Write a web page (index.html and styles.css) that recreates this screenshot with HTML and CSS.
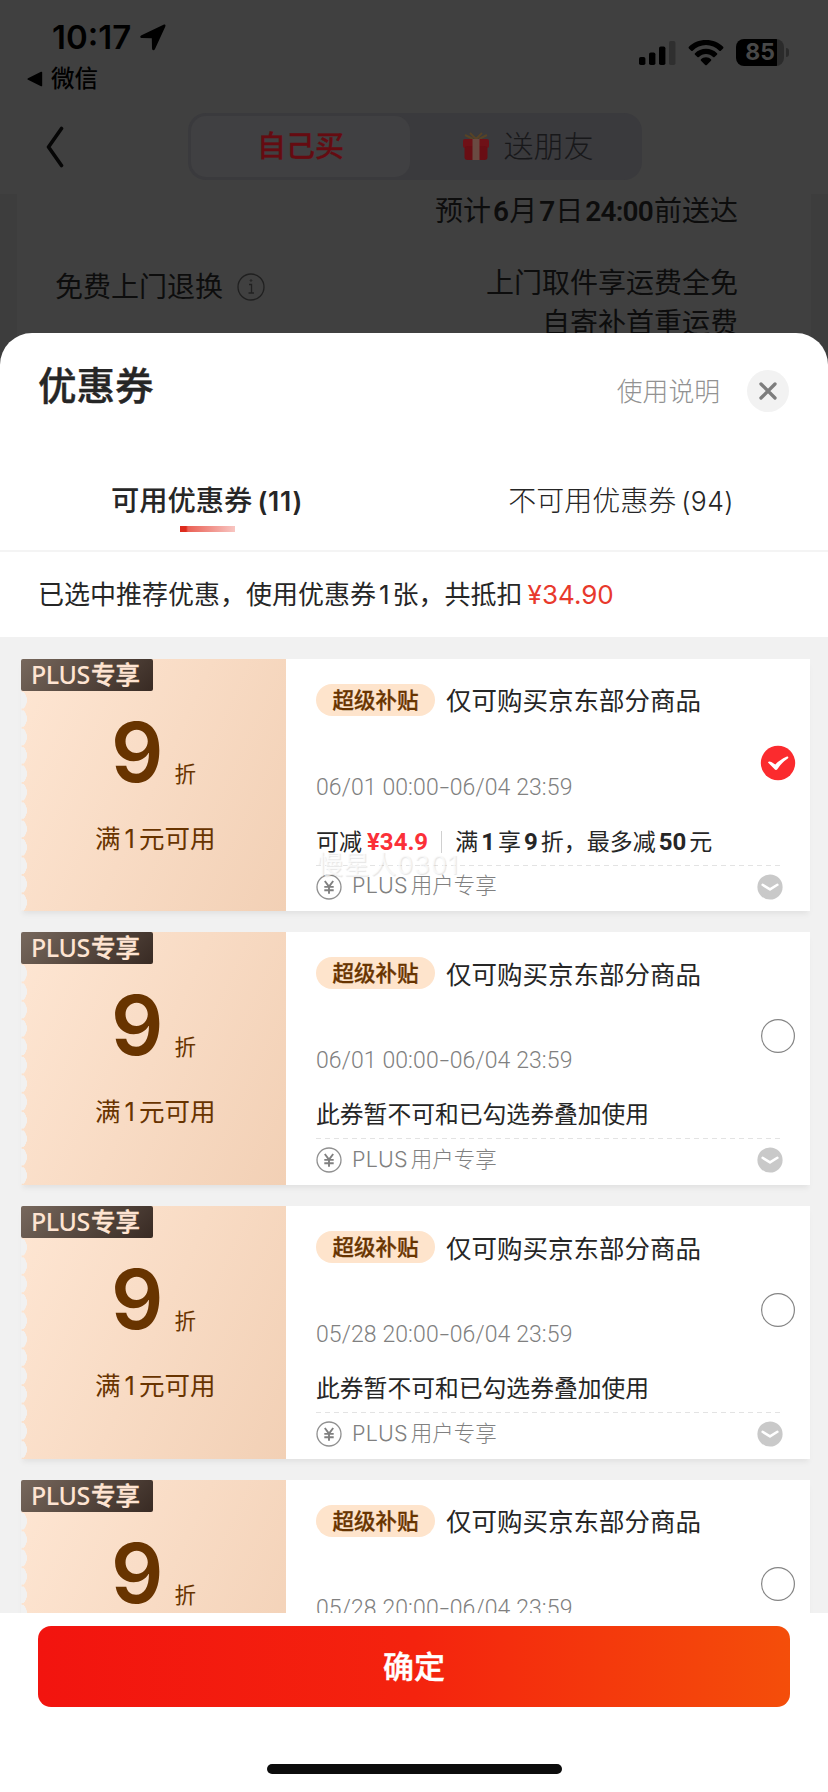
FILE: index.html
```html
<!DOCTYPE html>
<html lang="zh-CN">
<head>
<meta charset="utf-8">
<title>优惠券</title>
<link rel="stylesheet" href="styles.css">
</head>
<body>
<svg width="0" height="0" class="defs">
  <symbol id="yen" viewBox="0 0 26 26"><circle cx="13" cy="13" r="12" fill="none" stroke="#909090" stroke-width="1.3"/><path d="M8.8 7l4.2 5.6L17.2 7M13 12.6v7.2M8.3 12.9h9.4M8.3 16.2h9.4" fill="none" stroke="#808080" stroke-width="1.9"/></symbol>
  <symbol id="more" viewBox="0 0 26 26"><circle cx="13" cy="13" r="12.6" fill="#c9c9c9"/><path d="M5.6 10.8l7.4 4.6 7.4-4.6" fill="none" stroke="#fff" stroke-width="2.5" stroke-linecap="round" stroke-linejoin="round"/></symbol>
  <symbol id="radio" viewBox="0 0 36 36"><circle cx="18" cy="18" r="16.4" fill="#fff" stroke="#858585" stroke-width="1.2"/></symbol>
  <symbol id="checked" viewBox="0 0 36 36"><circle cx="18" cy="18" r="17.2" fill="#fb2b2e"/><path d="M8 17.6c.6-1.5 2-1.2 3.300-.5l4 2.300c2.500-2.700 6.500-5.600 11.200-7.700 1.500-.6 2.500.7 1.300 1.800-4 2.500-7.400 6-10.300 10.500-.9 1.300-2.100 1.300-3.100.1z" fill="#fff"/></symbol>
</svg>
<div class="screen">
  <div class="page">
    <div class="status">
      <div class="status-left">
        <div class="clock"><span>10:17</span><svg width="26" height="27" viewBox="0 0 26 27"><path d="M23.500.8L1.500 11.200c-2 1-1.500 2.800.6 2.800l9.700.2.200 10c0 2.200 2 2.700 3 .7L25.200 2.700C26 1 25 .1 23.500.8z"/></svg></div>
        <div class="return"><svg width="16" height="16" viewBox="0 0 16 16"><path d="M14 .8L1 7.200q-1.200.8 0 1.600l13 6.400q1.200.4 1.200-.8V1.600q0-1.200-1.200-.8z"/></svg><span>微信</span></div>
      </div>
      <div class="status-right">
        <svg width="37" height="26" viewBox="0 0 37 26"><rect x="0" y="17" width="6.400" height="8" rx="1.800"/><rect x="10" y="12.500" width="6.400" height="12.500" rx="1.800"/><rect x="20" y="6.500" width="6.400" height="18.500" rx="1.800"/><rect x="30" y="1" width="6.400" height="24" rx="1.800" fill="#2f2f2f"/></svg>
        <svg class="wifi" width="36" height="26" viewBox="0 0 36 26"><path d="M18 0C11 0 5 2.600.9 6.800q-.8.8 0 1.600l2.300 2.300q.7.700 1.500 0C8.300 7.200 12.900 5.100 18 5.100s9.700 2.100 13.300 5.600q.8.700 1.500 0l2.300-2.300q.8-.8 0-1.600C31 2.600 25 0 18 0z"/><path d="M18 8.700c-4.300 0-8.200 1.700-11 4.500q-.8.800 0 1.500l2.400 2.300q.7.700 1.500 0c1.900-1.900 4.400-3 7.100-3s5.200 1.100 7.100 3q.8.700 1.500 0l2.400-2.300q.8-.7 0-1.500c-2.800-2.800-6.700-4.500-11-4.500z"/><path d="M18 17.200c-2 0-3.800.8-5 2q-.7.800 0 1.600l4.200 4.200q.8.700 1.600 0l4.200-4.200q.7-.8 0-1.600c-1.200-1.200-3-2-5-2z"/></svg>
        <div class="battery"><span>85</span></div><i class="nub"></i>
      </div>
    </div>
    <div class="nav">
      <svg width="18" height="42" viewBox="0 0 18 42"><path d="M15.500 2.500L2.500 21l13 18.500" fill="none" stroke="#060606" stroke-width="3.600" stroke-linecap="round" stroke-linejoin="round"/></svg>
      <div class="segments">
        <div class="segment active">自己买</div>
        <div class="segment"><svg width="28" height="29" viewBox="0 0 28 29"><path d="M3 3l8 4M25 3l-8 4M14 7L8 1M14 7l6-6" stroke="#574326" stroke-width="2" fill="none"/><rect x="1" y="7" width="26" height="9" rx="2" fill="#6f1117"/><rect x="2.500" y="14" width="23" height="14" rx="3" fill="#690e14"/><rect x="10.500" y="7" width="7" height="21" fill="#6a4a42"/></svg><span>送朋友</span></div>
      </div>
    </div>
    <div class="order">
      <div class="arrive">预计<b>6</b>月<b>7</b>日<b>24:00</b>前送达</div>
      <div class="returns">
        <div class="returns-label"><span>免费上门退换</span><svg width="28" height="28" viewBox="0 0 28 28" fill="none" stroke="#202020"><circle cx="14" cy="14" r="13" stroke-width="1.300"/><path d="M12 11.500h2.500v8M11.500 20h5.500" stroke-width="1.300"/><circle cx="14" cy="7.500" r=".8"/></svg></div>
        <div class="returns-value">上门取件享运费全免<br>自寄补首重运费</div>
      </div>
    </div>
  </div>

  <div class="sheet">
    <div class="sheet-head">
      <h1>优惠券</h1>
      <span class="help">使用说明</span>
      <svg width="42" height="42" viewBox="0 0 42 42"><circle cx="21" cy="21" r="21" fill="#f2f2f2"/><path d="M14 14l14 14M28 14L14 28" stroke="#7d7d7d" stroke-width="3.300" stroke-linecap="round"/></svg>
    </div>
    <div class="tabs">
      <div class="tab current"><span>可用优惠券<em>(11)</em></span><i></i></div>
      <div class="tab"><span>不可用优惠券<em>(94)</em></span></div>
    </div>
    <div class="summary">已选中推荐优惠，使用优惠券<em>1</em>张，共抵扣<strong>¥34.90</strong></div>
    <div class="list">
      <div class="coupon">
        <div class="ticket"><div class="plus">PLUS<b>专享</b></div><div class="rate"><strong>9</strong><span>折</span></div><div class="limit">满<em>1</em>元可用</div></div>
        <div class="info">
          <div class="title"><span class="badge">超级补贴</span><span class="scope">仅可购买京东部分商品</span></div>
          <div class="date">06/01 00:00<span class="dash">-</span>06/04 23:59</div>
          <div class="detail offer"><span>可减</span><strong>¥34.9</strong><i></i><span>满<b>1</b>享<b>9</b>折，最多减<b>50</b>元</span></div>
          <div class="note"><svg width="26" height="26"><use href="#yen"/></svg><span><em>PLUS</em>用户专享</span><svg class="more" width="26" height="26"><use href="#more"/></svg></div>
          <svg class="choice" width="36" height="36"><use href="#checked"/></svg>
          <div class="watermark">慢星人0301</div>
        </div>
      </div>
      <div class="coupon">
        <div class="ticket"><div class="plus">PLUS<b>专享</b></div><div class="rate"><strong>9</strong><span>折</span></div><div class="limit">满<em>1</em>元可用</div></div>
        <div class="info">
          <div class="title"><span class="badge">超级补贴</span><span class="scope">仅可购买京东部分商品</span></div>
          <div class="date">06/01 00:00<span class="dash">-</span>06/04 23:59</div>
          <div class="detail">此券暂不可和已勾选券叠加使用</div>
          <div class="note"><svg width="26" height="26"><use href="#yen"/></svg><span><em>PLUS</em>用户专享</span><svg class="more" width="26" height="26"><use href="#more"/></svg></div>
          <svg class="choice" width="36" height="36"><use href="#radio"/></svg>
        </div>
      </div>
      <div class="coupon">
        <div class="ticket"><div class="plus">PLUS<b>专享</b></div><div class="rate"><strong>9</strong><span>折</span></div><div class="limit">满<em>1</em>元可用</div></div>
        <div class="info">
          <div class="title"><span class="badge">超级补贴</span><span class="scope">仅可购买京东部分商品</span></div>
          <div class="date">05/28 20:00<span class="dash">-</span>06/04 23:59</div>
          <div class="detail">此券暂不可和已勾选券叠加使用</div>
          <div class="note"><svg width="26" height="26"><use href="#yen"/></svg><span><em>PLUS</em>用户专享</span><svg class="more" width="26" height="26"><use href="#more"/></svg></div>
          <svg class="choice" width="36" height="36"><use href="#radio"/></svg>
        </div>
      </div>
      <div class="coupon">
        <div class="ticket"><div class="plus">PLUS<b>专享</b></div><div class="rate"><strong>9</strong><span>折</span></div></div>
        <div class="info">
          <div class="title"><span class="badge">超级补贴</span><span class="scope">仅可购买京东部分商品</span></div>
          <div class="date">05/28 20:00<span class="dash">-</span>06/04 23:59</div>
          <svg class="choice" width="36" height="36"><use href="#radio"/></svg>
        </div>
      </div>
    </div>
    <div class="footer">
      <div class="confirm">确定</div>
      <div class="home"></div>
    </div>
  </div>
</div>
</body>
</html>
```

FILE: styles.css
```css
* { box-sizing: border-box; }
body { margin: 0; font-family: Inter, "Noto Sans CJK SC", sans-serif; color: #262626; }
em { font-style: normal; }
svg { display: block; flex: none; }
.defs { position: absolute; }
.screen { width: 828px; height: 1792px; overflow: hidden; background: #404040; white-space: nowrap; }

/* Dimmed order page */
.page { height: 364px; color: #0d0d0d; }
.status { height: 98px; display: flex; justify-content: space-between; padding: 18px 39px 0 27px; color: #000; }
.clock { display: flex; align-items: center; gap: 9px; height: 38px; padding-left: 25px; }
.clock span { font-size: 33px; font-weight: 600; letter-spacing: 0; line-height: 38px; }
.return { display: flex; align-items: center; gap: 8px; height: 46px; }
.return span { font-size: 23.500px; font-weight: 500; line-height: 46px; }
.status-right { display: flex; align-items: center; height: 69px; }
.wifi { margin-left: 12px; }
.battery { margin-left: 12px; width: 48px; height: 27px; border-radius: 8px; background: linear-gradient(90deg, #000 41px, #2b2b2b 41px); display: flex; align-items: center; }
.battery span { width: 46px; padding-left: 2px; text-align: center; font-size: 23px; font-weight: 700; color: #484848; line-height: 27px; }
.nub { width: 3px; height: 9px; margin-left: 2px; border-radius: 0 3px 3px 0; background: #2b2b2b; }
.nav { height: 96px; display: flex; align-items: center; padding: 1px 0 0 46px; }
.segments { margin-left: 124px; width: 454px; height: 67px; padding: 3px; border-radius: 18px; background: #3a3a3d; display: flex; }
.segment { flex: 1; display: flex; align-items: center; justify-content: center; gap: 14px; font-size: 30px; line-height: 56px; font-weight: 300; color: #18181a; padding: 0 0 2px 6px; }
.segment svg { margin-top: 2px; }
.segment.active { flex: none; width: 219px; border-radius: 15px; background: #404042; color: #650b11; font-size: 29px; font-weight: 500; padding: 0; -webkit-text-stroke: .3px #650b11; }
.order { height: 170px; border: solid #3d3d3d; border-width: 0 17px; padding: 0 73px 0 38px; font-size: 28px; line-height: 40px; }
.arrive { text-align: right; height: 34px; line-height: 34px; font-size: 28px; }
.arrive b { font-family: Roboto, sans-serif; font-size: 28px; font-weight: 600; letter-spacing: -.8px; margin: 0 1px 0 2px; }
.returns { display: flex; justify-content: space-between; padding-top: 35px; }
.returns-label { display: flex; align-items: center; height: 47px; gap: 14px; }
.returns-value { text-align: right; }

/* Coupon sheet */
.sheet { position: relative; margin-top: -31px; height: 1459px; border-radius: 32px 32px 0 0; background: #fff; overflow: hidden; }
.sheet-head { height: 115px; display: flex; align-items: center; padding: 0 39px 0 38px; }
.sheet-head h1 { margin: 0 auto 9px 0; font-size: 38.500px; font-weight: 500; line-height: 50px; -webkit-text-stroke: .4px #262626; }
.help { font-size: 25.800px; font-weight: 300; color: #929292; margin: 0 27px 3px 0; }
.tabs { height: 104px; display: grid; grid-template-columns: 1fr 1fr; padding-top: 29px; border-bottom: 2px solid #f4f4f4; font-size: 28px; font-weight: 300; }
.tab { display: flex; flex-direction: column; align-items: center; line-height: 48px; }
.tab em { margin-left: 5px; font-size: 26.500px; letter-spacing: .4px; }
.tab.current { font-weight: 500; font-size: 28.300px; }
.tab.current em { font-weight: 600; letter-spacing: .8px; }
.tab i { width: 55px; height: 6px; margin-top: 1px; background: linear-gradient(90deg, #dd2b1d 6px, #ea6156 8px, #f8c6c2); }
.summary { height: 85px; line-height: 86px; padding-left: 38px; font-size: 26px; }
.summary em { margin: 0 3px; }
.summary strong { margin-left: 5px; font-weight: 400; color: #e8392c; }
.list { height: 976px; overflow: hidden; padding: 21.500px 18px 0 21px; background: #f1f1f1; }
.coupon { height: 252.500px; margin-bottom: 21.300px; display: flex; background: #fff; box-shadow: 0 5px 5px -2px #e2e2e2; }
.ticket { width: 265px; flex: none; color: #683400; background: radial-gradient(ellipse 6px 9px at 0 50%, #f1f1f1 96%, transparent) 0 32px / 8px 18.400px repeat-y, linear-gradient(115deg, #fee6d3, #f2d0b5); }
.plus { width: 132px; height: 32px; padding-left: 10px; border-radius: 2px; background: linear-gradient(135deg, #77685d, #382a23); color: #fee4d2; font-family: "Noto Sans", "Noto Sans CJK SC", sans-serif; font-size: 25px; font-weight: 500; line-height: 31px; letter-spacing: -.4px; }
.plus b { margin-left: 1px; font-weight: 500; font-size: 24.500px; letter-spacing: 0; -webkit-text-stroke: .4px #fee4d2; }
.rate { height: 122px; display: flex; align-items: baseline; padding-left: 90px; gap: 11px; }
.rate strong { font-size: 82px; line-height: 123px; font-weight: 600; }
.rate span { font-size: 21.500px; }
.limit { padding: 7px 0 0 74px; font-size: 25.500px; line-height: 38px; }
.limit em { margin: 0 4px; }
.info { flex: 1; position: relative; padding: 25px 27px 0 30px; }
.title { display: flex; align-items: center; height: 32px; gap: 11px; font-size: 25.500px; }
.scope { margin-top: -2px; }
.badge { width: 119px; height: 32px; border-radius: 16px; background: #fee4cc; text-align: center; line-height: 33px; font-size: 21.500px; font-weight: 500; color: #683400; -webkit-text-stroke: .3px #683400; }
.date { margin-top: 55px; height: 32px; line-height: 33px; font-family: Roboto, sans-serif; font-weight: 300; font-size: 23px; letter-spacing: .1px; color: #808080; }
.dash { display: inline-block; width: 11px; text-align: center; transform: scaleX(1.500); }
.detail { margin-top: 21px; height: 36px; line-height: 36px; font-size: 23.800px; }
.offer { display: flex; align-items: center; font-size: 23px; }
.offer strong { margin-left: 5px; font-family: Roboto, sans-serif; color: #fb3038; font-weight: 700; font-size: 24px; }
.offer b { font-family: Roboto, sans-serif; font-size: 24px; margin: 0 3px; }
.offer i { width: 1px; height: 22px; margin: 0 13px; background: #d0d0d0; }
.note { height: 44px; margin: 5px 0 0; display: flex; align-items: center; background: repeating-linear-gradient(90deg, #e3e3e3 0 5px, transparent 5px 9px) 0 0 / 100% 1px no-repeat; }
.note > span { margin: -6px 0 0 10px; font-size: 21.500px; font-weight: 300; color: #808080; }
.note em { margin-right: 3px; letter-spacing: .2px; }
.more { margin-left: auto; }
.choice { position: absolute; right: 14px; top: 86px; }
.watermark { position: absolute; left: 31px; top: 188px; font-size: 26px; line-height: 36px; letter-spacing: .6px; color: rgba(255,255,255,.7); text-shadow: 1px 1px 1px rgba(0,0,0,.1); }
.footer { padding: 13px 38px 0; }
.confirm { height: 81px; border-radius: 13px; background: linear-gradient(90deg, #f2140f, #f4230e 50%, #f44e0a); color: #fff; text-align: center; font-size: 31px; font-weight: 500; line-height: 81px; -webkit-text-stroke: .4px #fff; }
.home { width: 295px; height: 10px; margin: 57px auto 0; border-radius: 5px; background: #0c0c0c; }
```
